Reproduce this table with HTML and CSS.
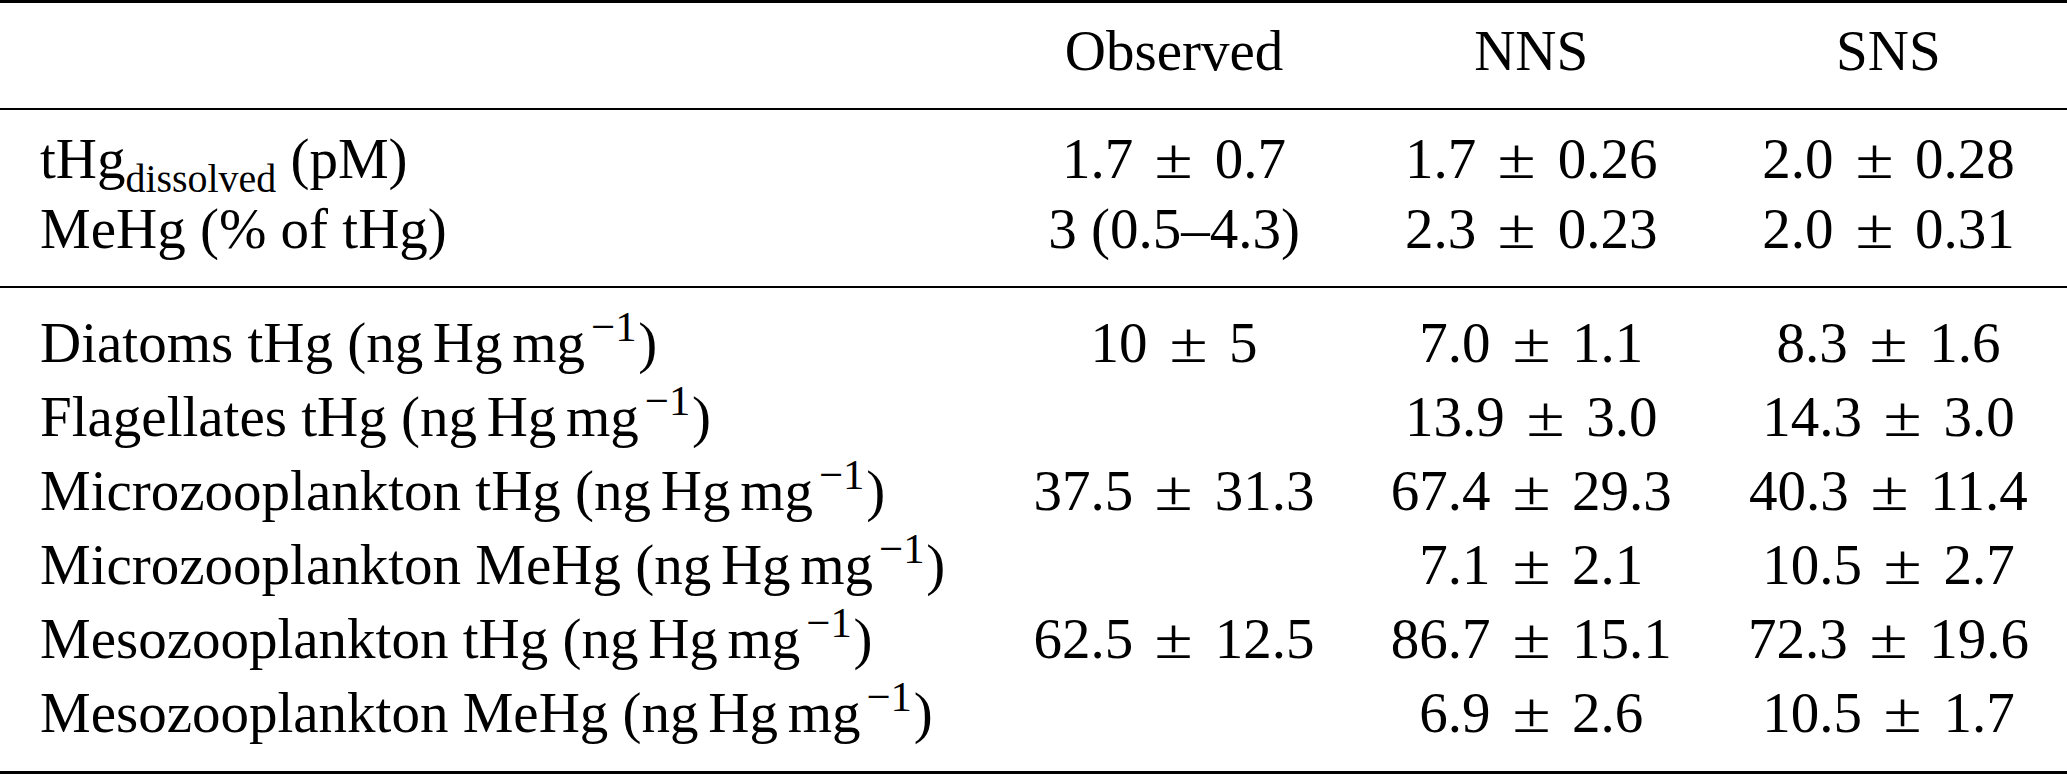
FILE: index.html
```html
<!DOCTYPE html>
<html lang="en">
<head>
<meta charset="utf-8">
<title>Mercury concentrations</title>
<link rel="stylesheet" href="styles.css">
</head>
<body>
<table class="data">
  <colgroup>
    <col class="c-label">
    <col class="c-val">
    <col class="c-val">
    <col class="c-val">
  </colgroup>
  <thead>
    <tr>
      <th class="label"></th>
      <th>Observed</th>
      <th>NNS</th>
      <th>SNS</th>
    </tr>
  </thead>
  <tbody class="conc">
    <tr class="first">
      <td class="label">tHg<sub>dissolved</sub> (pM)</td>
      <td>1.7 <span class="pm">±</span> 0.7</td>
      <td>1.7 <span class="pm">±</span> 0.26</td>
      <td>2.0 <span class="pm">±</span> 0.28</td>
    </tr>
    <tr class="last">
      <td class="label">MeHg (% of tHg)</td>
      <td class="range">3 (0.5–4.3)</td>
      <td>2.3 <span class="pm">±</span> 0.23</td>
      <td>2.0 <span class="pm">±</span> 0.31</td>
    </tr>
  </tbody>
  <tbody class="tissue">
    <tr class="first">
      <td class="label">Diatoms tHg (ng<span class="th"> </span>Hg<span class="th"> </span>mg<sup>−1</sup>)</td>
      <td>10 <span class="pm">±</span> 5</td>
      <td>7.0 <span class="pm">±</span> 1.1</td>
      <td>8.3 <span class="pm">±</span> 1.6</td>
    </tr>
    <tr>
      <td class="label">Flagellates tHg (ng<span class="th"> </span>Hg<span class="th"> </span>mg<sup>−1</sup>)</td>
      <td></td>
      <td>13.9 <span class="pm">±</span> 3.0</td>
      <td>14.3 <span class="pm">±</span> 3.0</td>
    </tr>
    <tr>
      <td class="label">Microzooplankton tHg (ng<span class="th"> </span>Hg<span class="th"> </span>mg<sup>−1</sup>)</td>
      <td>37.5 <span class="pm">±</span> 31.3</td>
      <td>67.4 <span class="pm">±</span> 29.3</td>
      <td>40.3 <span class="pm">±</span> 11.4</td>
    </tr>
    <tr>
      <td class="label">Microzooplankton MeHg (ng<span class="th"> </span>Hg<span class="th"> </span>mg<sup>−1</sup>)</td>
      <td></td>
      <td>7.1 <span class="pm">±</span> 2.1</td>
      <td>10.5 <span class="pm">±</span> 2.7</td>
    </tr>
    <tr>
      <td class="label">Mesozooplankton tHg (ng<span class="th"> </span>Hg<span class="th"> </span>mg<sup>−1</sup>)</td>
      <td>62.5 <span class="pm">±</span> 12.5</td>
      <td>86.7 <span class="pm">±</span> 15.1</td>
      <td>72.3 <span class="pm">±</span> 19.6</td>
    </tr>
    <tr class="last">
      <td class="label">Mesozooplankton MeHg (ng<span class="th"> </span>Hg<span class="th"> </span>mg<sup>−1</sup>)</td>
      <td></td>
      <td>6.9 <span class="pm">±</span> 2.6</td>
      <td>10.5 <span class="pm">±</span> 1.7</td>
    </tr>
  </tbody>
</table>
</body>
</html>
```

FILE: styles.css
```css
html, body {
  margin: 0;
  padding: 0;
  background: #ffffff;
  color: #000000;
  font-family: "Liberation Serif", "Times New Roman", serif;
}

.data {
  width: 2067px;
  border-collapse: separate;
  border-spacing: 0;
  table-layout: fixed;
  font-size: 57px;
  line-height: 70px;
}

.c-label {
  width: 995px;
}

.c-val {
  width: 357px;
}

.data th,
.data td {
  padding: 0;
  text-align: center;
  font-weight: normal;
  white-space: nowrap;
  word-spacing: 0.19em;
}

.data .label,
.data .range {
  word-spacing: normal;
}

.data .label {
  text-align: left;
  padding-left: 40px;
}

.pm {
  display: inline-block;
  transform: scaleX(1.22);
  word-spacing: normal;
}

.data thead th {
  border-top: 3px solid #000;
  border-bottom: 2px solid #000;
  padding-top: 12.75px;
  padding-bottom: 22.25px;
}

.conc .first td {
  padding-top: 14px;
}

.conc .last td {
  padding-bottom: 22px;
}

.tissue td {
  line-height: 74px;
}

.tissue .first td {
  border-top: 2px solid #000;
  padding-top: 18px;
}

.tissue .last td {
  border-bottom: 3px solid #000;
  padding-bottom: 21px;
}

.th {
  word-spacing: -0.08em;
}

.data sup {
  font-size: 0.75em;
  line-height: 0;
  vertical-align: 0.5em;
  margin-left: 0.14em;
  margin-right: 0.04em;
}

.data sub {
  font-size: 0.7em;
  line-height: 0;
  vertical-align: -0.35em;
}
```
